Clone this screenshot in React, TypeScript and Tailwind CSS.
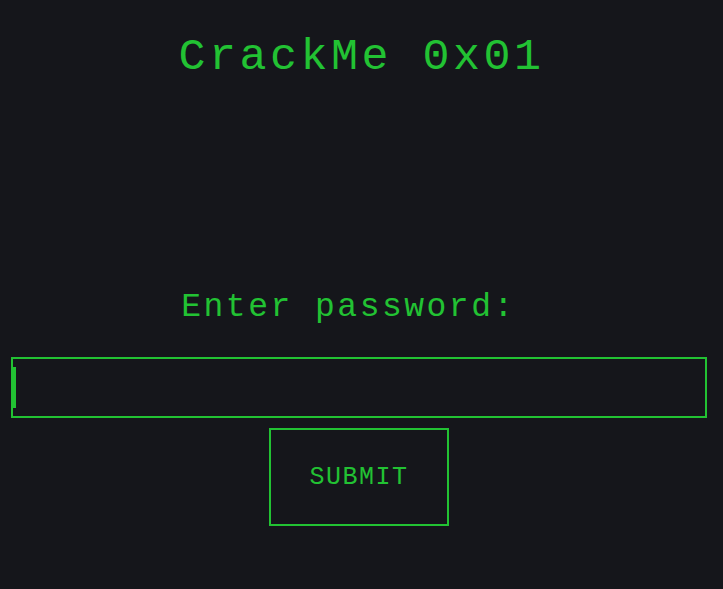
import React, { useState } from 'react';

export default function App() {
  const [password, setPassword] = useState('');

  return (
    <div className="min-h-screen w-full bg-[#15161b] text-[#22c233] font-['Liberation_Mono','Courier_New',monospace] flex flex-col">
      <h1 className="text-center text-[45px] leading-none tracking-[3.5px] pt-[35px]">CrackMe 0x01</h1>
      <div className="mt-[211px] text-center text-[33px] leading-none tracking-[2.5px] pr-[26px]">Enter password:</div>
      <div className="mt-[33px] ml-[11px] w-[696px] h-[61px] border-2 border-[#22c233] flex items-center">
        <div className="w-[3px] h-[41px] bg-[#22c233]" />
        <input
          className="hidden"
          type="password"
          value={password}
          onChange={e => setPassword(e.target.value)}
        />
      </div>
      <button className="mt-[10px] ml-[269px] w-[180px] h-[98px] border-2 border-[#22c233] text-[25px] leading-none tracking-[1.5px]">
        SUBMIT
      </button>
    </div>
  );
}
